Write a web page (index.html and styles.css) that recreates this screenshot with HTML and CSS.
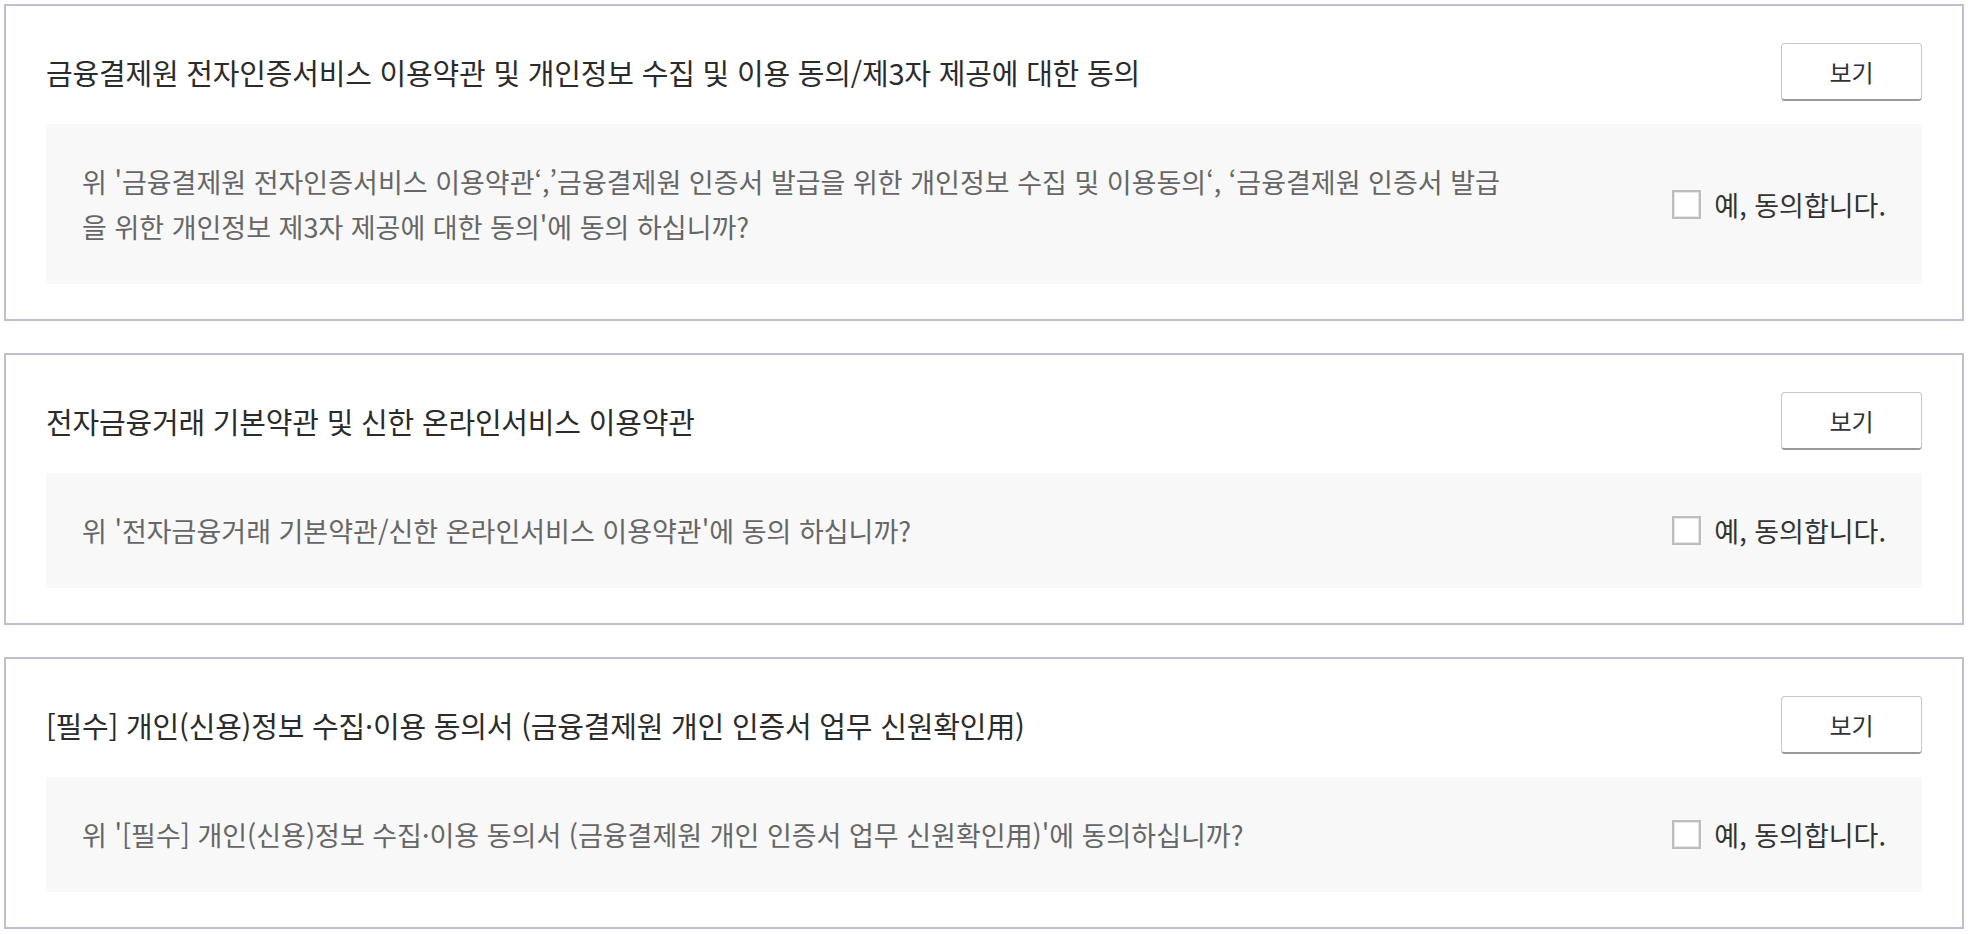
FILE: index.html
```html
<!DOCTYPE html>
<html lang="ko">

<head>
  <meta charset="UTF-8">
  <title>약관 동의</title>
  <meta name="viewport" content="width=device-width, initial-scale=1.0">
  <link rel="stylesheet" href="styles.css">
</head>

<body>

  <div class="agree-list">

    <section class="agree-item">
      <div class="agree-head">
        <h3 class="agree-title">금융결제원 전자인증서비스 이용약관 및 개인정보 수집 및 이용 동의/제3자 제공에 대한 동의</h3>
        <button type="button" class="btn-view">보기</button>
      </div>
      <div class="agree-box">
        <p class="agree-desc">위 '금융결제원 전자인증서비스 이용약관‘,’금융결제원 인증서 발급을 위한 개인정보 수집 및 이용동의‘, ‘금융결제원 인증서 발급을 위한 개인정보 제3자 제공에 대한 동의'에 동의 하십니까?</p>
        <label class="agree-check">
          <input type="checkbox" name="agree1">
          <span>예, 동의합니다.</span>
        </label>
      </div>
    </section>

    <section class="agree-item">
      <div class="agree-head">
        <h3 class="agree-title">전자금융거래 기본약관 및 신한 온라인서비스 이용약관</h3>
        <button type="button" class="btn-view">보기</button>
      </div>
      <div class="agree-box">
        <p class="agree-desc">위 '전자금융거래 기본약관/신한 온라인서비스 이용약관'에 동의 하십니까?</p>
        <label class="agree-check">
          <input type="checkbox" name="agree2">
          <span>예, 동의합니다.</span>
        </label>
      </div>
    </section>

    <section class="agree-item">
      <div class="agree-head">
        <h3 class="agree-title">[필수] 개인(신용)정보 수집·이용 동의서 (금융결제원 개인 인증서 업무 신원확인用)</h3>
        <button type="button" class="btn-view">보기</button>
      </div>
      <div class="agree-box">
        <p class="agree-desc">위 '[필수] 개인(신용)정보 수집·이용 동의서 (금융결제원 개인 인증서 업무 신원확인用)'에 동의하십니까?</p>
        <label class="agree-check">
          <input type="checkbox" name="agree3">
          <span>예, 동의합니다.</span>
        </label>
      </div>
    </section>

  </div>

</body>

</html>
```

FILE: styles.css
```css
body {
  margin: 0;
  background: #fff;
  font-family: "Noto Sans CJK KR", "Noto Sans", sans-serif;
  color: #333;
}

.agree-list {
  display: flex;
  flex-direction: column;
  gap: 32px;
  padding: 4px 6px 4px 4px;
}

.agree-item {
  border: 2px solid #bcc0d3;
  padding: 37px 40px 35px;
}

/* 제목 + 보기 버튼 */
.agree-head {
  display: flex;
  justify-content: space-between;
  align-items: center;
  height: 58px;
  margin-bottom: 23px;
}

.agree-title {
  margin: 0;
  font-size: 29px;
  font-weight: 400;
  letter-spacing: -0.2px;
  color: #2b2b2b;
}

.btn-view {
  width: 141px;
  height: 58px;
  background: #fff;
  border: 1px solid #c8c8c8;
  border-bottom: 2px solid #999;
  border-radius: 4px;
  font-family: inherit;
  font-size: 24px;
  color: #333;
  cursor: pointer;
}

/* 회색 동의 영역 */
.agree-box {
  display: flex;
  justify-content: space-between;
  align-items: center;
  background: #f8f8f8;
  padding: 35px 36px;
}

.agree-desc {
  margin: 0;
  width: 1420px;
  font-size: 27px;
  line-height: 45px;
  color: #666;
}

.agree-check {
  display: flex;
  align-items: center;
  gap: 13px;
  font-size: 27px;
  color: #333;
  cursor: pointer;
}

.agree-check input {
  appearance: none;
  margin: 0;
  width: 29px;
  height: 29px;
  background: #fff;
  border: 2px solid #bdbdbd;
  box-shadow: inset 0 0 0 1px #e6e6e6;
}

.agree-check input:checked {
  background: #fff;
  border-color: #0046ff;
}
```
